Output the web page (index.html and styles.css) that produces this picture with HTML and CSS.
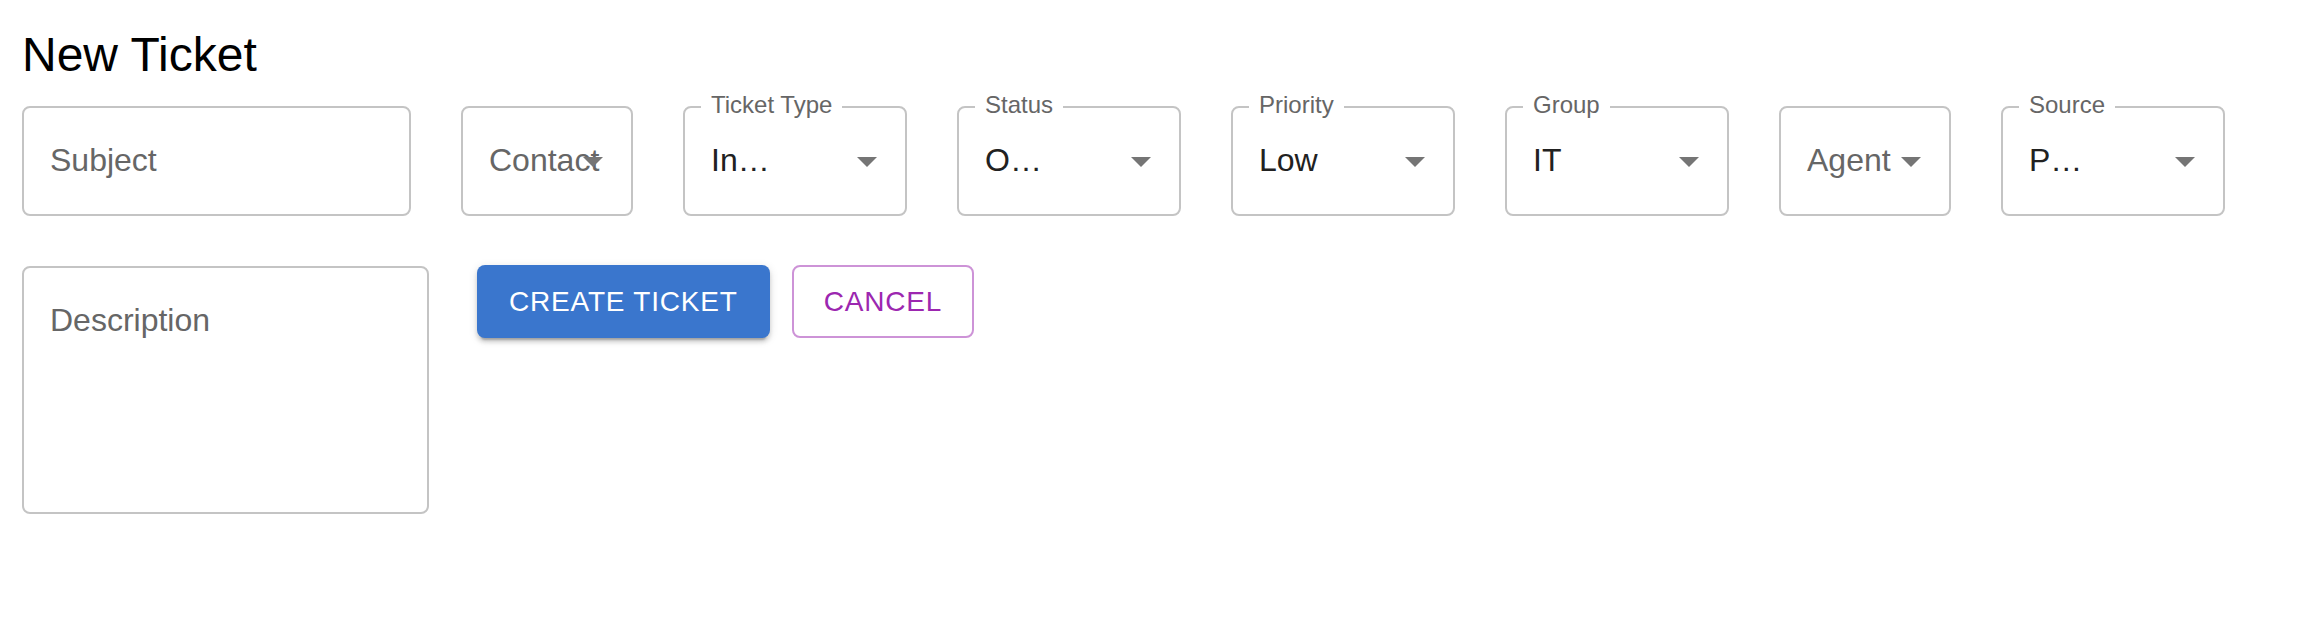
FILE: index.html
```html
<!DOCTYPE html>
<html lang="en">
<head>
<meta charset="utf-8">
<title>New Ticket</title>
<link rel="stylesheet" href="styles.css">
</head>
<body>
<div class="page">
  <h1 class="title">New Ticket</h1>
  <div class="fields">
    <div class="field w-lg"><span class="placeholder">Subject</span></div>
    <div class="field w-sm"><span class="placeholder">Contact</span><svg class="arrow" viewBox="0 0 24 24"><path d="M7 10l5 5 5-5z"/></svg></div>
    <div class="field w-md"><span class="legend">Ticket Type</span><span class="value">In…</span><svg class="arrow" viewBox="0 0 24 24"><path d="M7 10l5 5 5-5z"/></svg></div>
    <div class="field w-md"><span class="legend">Status</span><span class="value">O…</span><svg class="arrow" viewBox="0 0 24 24"><path d="M7 10l5 5 5-5z"/></svg></div>
    <div class="field w-md"><span class="legend">Priority</span><span class="value">Low</span><svg class="arrow" viewBox="0 0 24 24"><path d="M7 10l5 5 5-5z"/></svg></div>
    <div class="field w-md"><span class="legend">Group</span><span class="value">IT</span><svg class="arrow" viewBox="0 0 24 24"><path d="M7 10l5 5 5-5z"/></svg></div>
    <div class="field w-sm"><span class="placeholder">Agent</span><svg class="arrow" viewBox="0 0 24 24"><path d="M7 10l5 5 5-5z"/></svg></div>
    <div class="field w-md"><span class="legend">Source</span><span class="value">P…</span><svg class="arrow" viewBox="0 0 24 24"><path d="M7 10l5 5 5-5z"/></svg></div>
  </div>
  <div class="actions">
    <div class="field textarea"><span class="placeholder">Description</span></div>
    <div class="buttons">
      <button class="btn btn-contained" type="button">Create Ticket</button>
      <button class="btn btn-outlined" type="button">Cancel</button>
    </div>
  </div>
</div>
</body>
</html>
```

FILE: styles.css
```css
html, body {
  margin: 0;
  padding: 0;
  background: #ffffff;
}

body {
  font-family: "Liberation Sans", Arial, Helvetica, sans-serif;
}

.page {
  padding: 23px 22px;
}

.title {
  margin: 0;
  font-size: 48px;
  font-weight: 400;
  line-height: 63px;
  color: #000000;
}

.fields {
  display: flex;
  gap: 50px;
  margin-top: 20px;
}

.field {
  position: relative;
  box-sizing: border-box;
  height: 110px;
  border: 2px solid #c4c4c4;
  border-radius: 8px;
  padding: 29px 26px 0 26px;
  font-size: 32px;
  line-height: 46px;
  white-space: nowrap;
}

.w-lg { width: 389px; }
.w-sm { width: 172px; }
.w-md { width: 224px; }

.placeholder {
  color: #666666;
}

.value {
  color: #212121;
}

.legend {
  position: absolute;
  left: 16px;
  top: -15px;
  padding: 0 10px;
  background: #ffffff;
  font-size: 24px;
  line-height: 24px;
  color: #666666;
}

.arrow {
  position: absolute;
  right: 14px;
  top: calc(50% - 24px);
  width: 48px;
  height: 48px;
  fill: #757575;
}

.actions {
  display: flex;
  align-items: flex-start;
  margin-top: 50px;
}

.textarea {
  width: 407px;
  height: 248px;
}

.buttons {
  display: flex;
  gap: 22px;
  margin-left: 48px;
  margin-top: -1px;
}

.btn {
  font-family: "Liberation Sans", Arial, Helvetica, sans-serif;
  font-size: 28px;
  font-weight: 400;
  letter-spacing: 0.02857em;
  text-transform: uppercase;
  line-height: 49px;
  border-radius: 8px;
  cursor: pointer;
  margin: 0;
}

.btn-contained {
  padding: 12px 32px;
  border: none;
  background: #3a76cd;
  color: #ffffff;
  box-shadow: 0 6px 2px -4px rgba(0, 0, 0, 0.2),
              0 4px 4px 0 rgba(0, 0, 0, 0.14),
              0 2px 10px 0 rgba(0, 0, 0, 0.12);
}

.btn-outlined {
  padding: 10px 30px;
  border: 2px solid rgba(156, 39, 176, 0.5);
  background: transparent;
  color: #9c27b0;
}
```
